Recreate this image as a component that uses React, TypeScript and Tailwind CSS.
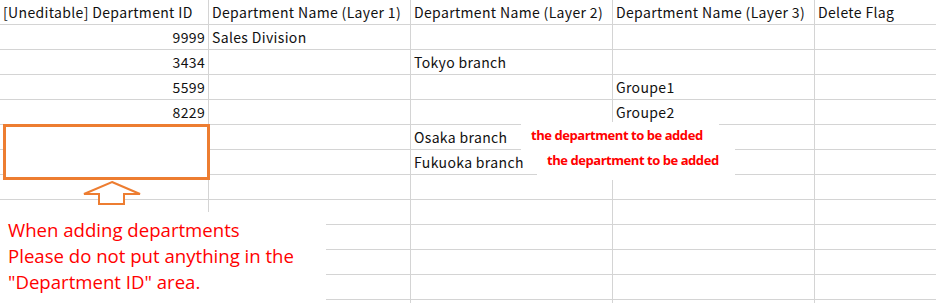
import React from "react"

const cellFont = { fontFamily: '"Noto Sans CJK JP", "Noto Sans", sans-serif' }
const noteFont = { fontFamily: '"Open Sans", sans-serif' }

const header = [
    "[Uneditable] Department ID",
    "Department Name (Layer 1)",
    "Department Name (Layer 2)",
    "Department Name (Layer 3)",
    "Delete Flag",
]

const rows: string[][] = [
    ["9999", "Sales Division", "", "", ""],
    ["3434", "", "Tokyo branch", "", ""],
    ["5599", "", "", "Groupe1", ""],
    ["8229", "", "", "Groupe2", ""],
    ["", "", "Osaka branch", "", ""],
    ["", "", "Fukuoka branch", "", ""],
    ["", "", "", "", ""],
    ["", "", "", "", ""],
    ["", "", "", "", ""],
    ["", "", "", "", ""],
    ["", "", "", "", ""],
    ["", "", "", "", ""],
]

function Cell({ text, right }: { text: string, right?: boolean }) {
    return (
        <div className={`h-[25px] border-r border-b border-[#d4d4d4] flex items-center px-[3px] whitespace-nowrap overflow-visible text-[14px] tracking-[0.35px] text-[#111] ${right ? "justify-end" : ""}`}>
            {text}
        </div>
    )
}

export default function App() {
    return (
        <div className="relative w-[936px] h-[303px] overflow-hidden bg-white" style={cellFont}>
            <div className="grid grid-cols-[209px_202px_202px_202px_202px] w-max">
                {header.map((h, i) => <Cell key={"h" + i} text={h} />)}
                {rows.map((r, ri) =>
                    r.map((c, ci) => <Cell key={ri + "-" + ci} text={c} right={ci === 0} />)
                )}
            </div>

            {/* callouts over the sheet */}
            <div className="absolute left-[3px] top-[124px] w-[207px] h-[56px] border-[3px] border-[#ed7d31] bg-white" />
            <svg className="absolute left-[82px] top-[180px]" width="60" height="26" viewBox="0 0 60 26">
                <path d="M30 2 L58 14 L42 14 L42 24 L17 24 L17 14 L2 14 Z" fill="white" stroke="#ed7d31" strokeWidth="2" strokeLinejoin="miter" />
            </svg>

            <div className="absolute left-[521px] top-[122px] w-[198px] h-[28px] bg-white flex items-center pl-[10px]">
                <span className="text-[13px] font-bold text-[#ff0000] tracking-[-0.45px]" style={noteFont}>the department to be added</span>
            </div>
            <div className="absolute left-[537px] top-[147px] w-[198px] h-[33px] bg-white flex items-center pl-[10px] pb-[5px]">
                <span className="text-[13px] font-bold text-[#ff0000] tracking-[-0.45px]" style={noteFont}>the department to be added</span>
            </div>

            <div className="absolute left-0 top-[212px] w-[326px] h-[91px] bg-white pl-[8px] pt-[5px] text-[18.6px] leading-[26px] text-[#ff0000]" style={noteFont}>
                <div>When adding departments</div>
                <div>Please do not put anything in the</div>
                <div>"Department ID" area.</div>
            </div>
        </div>
    )
}
